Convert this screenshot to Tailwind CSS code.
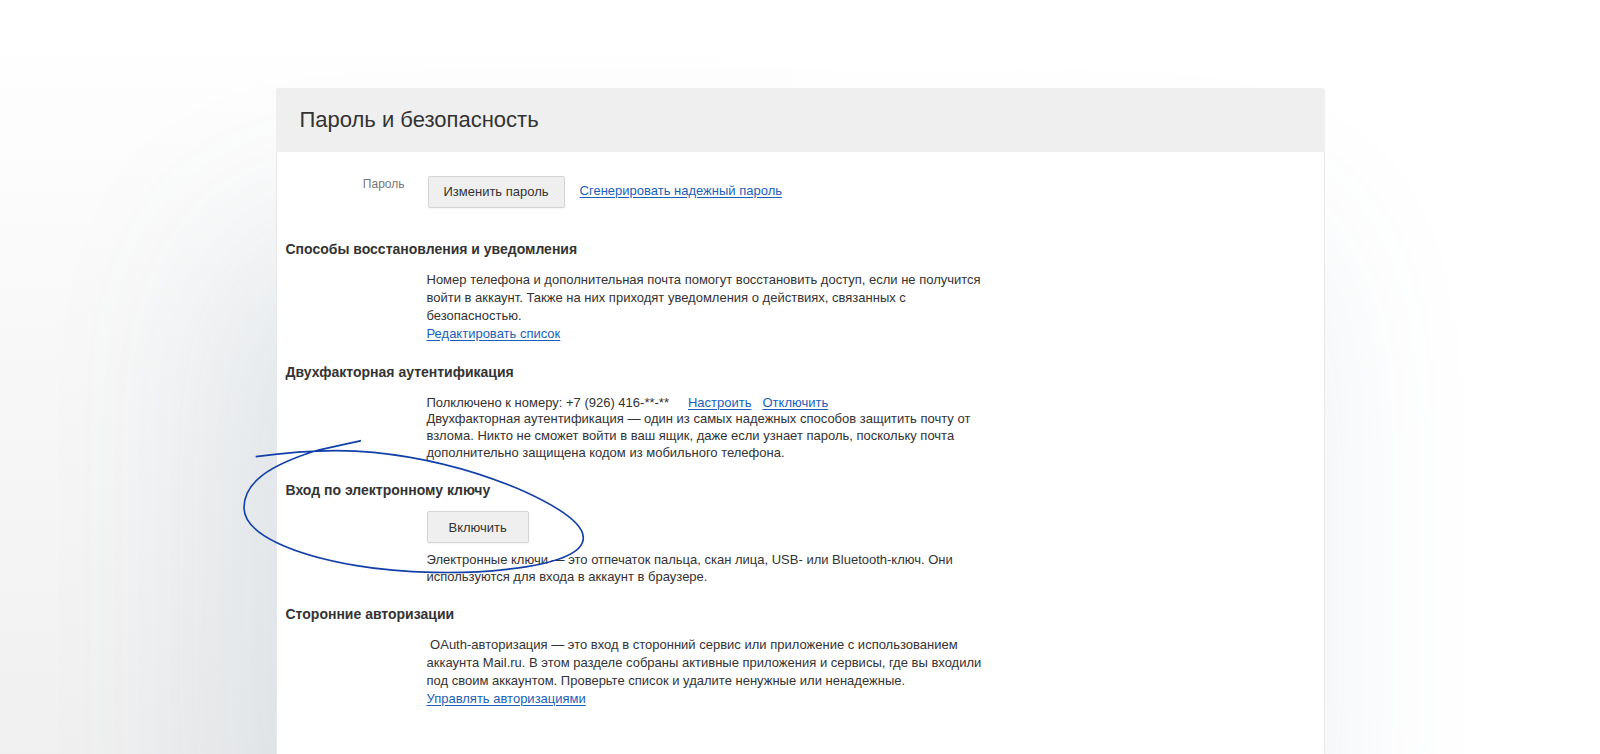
<!DOCTYPE html>
<html lang="ru">
<head>
    <meta charset="UTF-8">
    <meta name="viewport" content="width=device-width, initial-scale=1.0">
    <title>Пароль и безопасность</title>
    <script src="https://cdn.jsdelivr.net/npm/@tailwindcss/browser@4"></script>
</head>
<body class="h-screen overflow-hidden bg-[linear-gradient(to_right,transparent_10%,white_80%),linear-gradient(to_bottom,white_3%,#f8f8f8_45%,#f0f0f0)] pt-22 font-['Liberation_Sans',Arial,sans-serif] text-[13px] text-[#333]">

    <!-- Settings card -->
    <main class="mx-auto h-full w-full max-w-[1049px] rounded-t border-x border-[#e6e8ea] bg-white shadow-[-40px_160px_190px_0_rgba(80,110,140,0.16)]">

        <header class="-mx-px rounded-t bg-[#efefef] px-6">
            <h1 class="text-[22px] leading-16">Пароль и безопасность</h1>
        </header>

        <!-- Password -->
        <section class="flex pt-6">
            <div class="w-[151px] pr-[23px] text-right text-[12px] leading-4 text-[#777]">Пароль</div>
            <div class="flex items-start gap-[15px] leading-[18px]">
                <button type="button" class="h-8 rounded-xs border border-[#d4d4d4] bg-[#efefef] px-[15px] shadow-xs">Изменить пароль</button>
                <a href="#" class="mt-1.5 text-[#1a5fb8] underline underline-offset-2">Сгенерировать надежный пароль</a>
            </div>
        </section>

        <!-- Recovery -->
        <section class="mt-[31px] pl-[9px]">
            <h2 class="text-[14px] leading-5 font-bold">Способы восстановления и уведомления</h2>
            <div class="mt-3 max-w-[710px] pl-[141px] leading-[18px]">
                <p>Номер телефона и дополнительная почта помогут восстановить доступ, если не получится войти в аккаунт. Также на них приходят уведомления о действиях, связанных с безопасностью.</p>
                <a href="#" class="text-[#1a5fb8] underline underline-offset-2">Редактировать список</a>
            </div>
        </section>

        <!-- Two-factor authentication -->
        <section class="mt-[19px] pl-[9px]">
            <h2 class="text-[14px] leading-5 font-bold">Двухфакторная аутентификация</h2>
            <div class="mt-3 max-w-[710px] pl-[141px] leading-[17px]">
                <div class="flex h-4 gap-[11px]">
                    <span class="pr-2">Полключено к номеру: +7 (926) 416-**-**</span>
                    <a href="#" class="text-[#1a5fb8] underline underline-offset-2">Настроить</a>
                    <a href="#" class="text-[#1a5fb8] underline underline-offset-2">Отключить</a>
                </div>
                <p>Двухфакторная аутентификация — один из самых надежных способов защитить почту от взлома. Никто не сможет войти в ваш ящик, даже если узнает пароль, поскольку почта дополнительно защищена кодом из мобильного телефона.</p>
            </div>
        </section>

        <!-- Security key -->
        <section class="relative mt-[19px] pl-[9px]">
            <h2 class="text-[14px] leading-5 font-bold">Вход по электронному ключу</h2>
            <div class="mt-[11px] max-w-[710px] pl-[141px] leading-[17px]">
                <button type="button" class="h-8 rounded-xs border border-[#d4d4d4] bg-[#efefef] px-[21px] shadow-xs">Включить</button>
                <p class="mt-2">Электронные ключи — это отпечаток пальца, скан лица, USB- или Bluetooth-ключ. Они используются для входа в аккаунт в браузере.</p>
            </div>
            <!-- Hand-drawn loop -->
            <svg class="pointer-events-none absolute -top-[43px] -left-[37px] h-[140px] w-[348px]" viewBox="30 50 1044 420" fill="none" stroke="#1340a8" stroke-width="5" aria-hidden="true">
                <path d="M77 109 C200 92 330 86 430 96 C600 113 760 160 880 212 C990 262 1060 310 1060 352 C1060 405 960 432 830 447 C700 462 520 460 380 436 C200 405 42 345 42 262 C42 185 120 135 255 92 C300 80 350 72 393 61" />
            </svg>
        </section>

        <!-- Third-party authorizations -->
        <section class="mt-[19px] pl-[9px]">
            <h2 class="text-[14px] leading-5 font-bold">Сторонние авторизации</h2>
            <div class="mt-3 max-w-[710px] pl-[141px] leading-[18px]">
                <p>&nbsp;OAuth-авторизация — это вход в сторонний сервис или приложение с использованием аккаунта Mail.ru. В этом разделе собраны активные приложения и сервисы, где вы входили под своим аккаунтом. Проверьте список и удалите ненужные или ненадежные.</p>
                <a href="#" class="text-[#1a5fb8] underline underline-offset-2">Управлять авторизациями</a>
            </div>
        </section>

    </main>

</body>
</html>
